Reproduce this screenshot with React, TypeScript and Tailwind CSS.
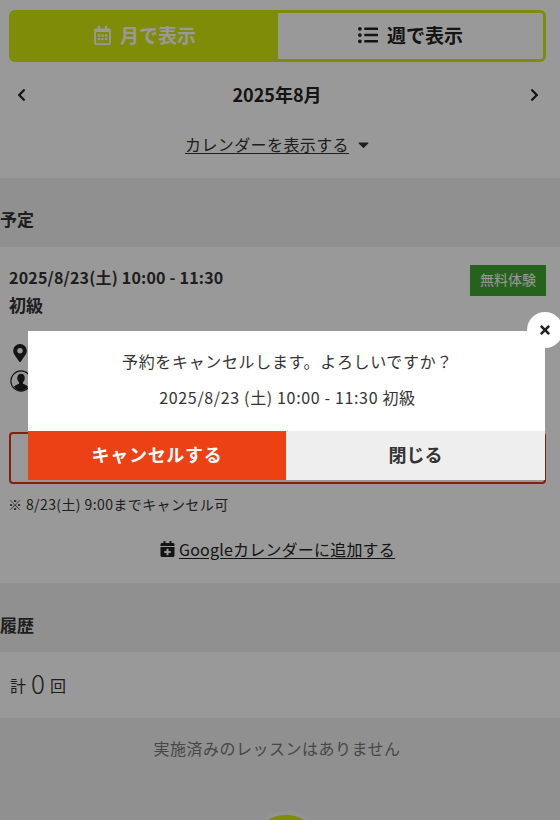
import React from "react";
import {
  FaCalendarPlus,
  FaCaretDown,
  FaChevronLeft,
  FaChevronRight,
  FaListUl,
  FaMapMarkerAlt,
  FaRegCalendarAlt,
  FaTimes,
} from "react-icons/fa";

const FONT = "font-['Noto_Sans_CJK_JP',sans-serif]";

const PersonIcon = () => (
  <svg viewBox="0 0 20 20" className="w-[22px] h-[22px] text-[#222]">
    <circle cx="10" cy="10" r="9.2" fill="none" stroke="currentColor" strokeWidth="1" />
    <path
      fill="currentColor"
      d="M10 3.4c-2.2 0-3.4 1.7-3.4 3.8 0 1.6.7 3 1.6 3.8v1.4c-1.6.8-3.4 1.3-4.6 2.8A9 9 0 0 0 10 19a9 9 0 0 0 6.4-3.8c-1.200-1.500-3-2-4.600-2.800V11c.9-.8 1.600-2.200 1.600-3.800 0-2.100-1.200-3.800-3.400-3.800z"
    />
  </svg>
);

const SectionHead = ({ title, className }: { title: string; className: string }) => (
  <div className={`bg-[#f0f0f0] flex items-end ${className}`}>
    <h2 className="text-[17px] leading-6 font-bold text-[#333]">{title}</h2>
  </div>
);

export default function App() {
  return (
    <div className={`relative w-[560px] h-[820px] overflow-hidden bg-white ${FONT}`}>
      {/* Month / week switch */}
      <div className="pl-[9px] pr-[14px] pt-[10px]">
        <div className="flex h-[52px] rounded-md border-[3px] border-[#d4e90c] overflow-hidden">
          <div className="w-[266px] pb-[2px] bg-[#d4e90c] flex items-center justify-center gap-[9px] text-white text-[19px] font-bold">
            <FaRegCalendarAlt className="w-[17px] h-[19px]" />
            <span>月で表示</span>
          </div>
          <div className="flex-1 pb-[2px] bg-white flex items-center justify-center gap-[9px] text-[#222] text-[19px] font-bold">
            <FaListUl className="w-[20px] h-[20px]" />
            <span>週で表示</span>
          </div>
        </div>
      </div>

      {/* Month nav */}
      <div className="flex items-center justify-between pl-[16px] pr-[20px] mt-[20px] h-[26px] text-[#222]">
        <FaChevronLeft className="w-[11px] h-[14px]" />
        <span className="text-[18px] font-bold pb-[2px] pr-[2px]">2025年8月</span>
        <FaChevronRight className="w-[11px] h-[14px]" />
      </div>
      <div className="flex items-center justify-center gap-[6px] mt-[24px] h-[24px] pr-[3px] text-[#333]">
        <span className="text-[16px] underline underline-offset-2 tracking-[0.4px]">カレンダーを表示する</span>
        <FaCaretDown className="w-[17px] h-[17px]" />
      </div>

      <SectionHead title="予定" className="mt-[22px] h-[69px] pb-[16px]" />

      {/* Reservation card */}
      <div className="h-[336px] pl-[9px] pr-[14px] relative">
        <div className="flex justify-between pt-[18px]">
          <div className="text-[#333] font-bold">
            <div className="text-[16px] leading-6 tracking-[0.2px]">2025/8/23(土) 10:00 - 11:30</div>
            <div className="text-[17px] leading-6 mt-1">初級</div>
          </div>
          <span className="w-[76px] h-[31px] pb-[2px] flex items-center justify-center bg-[#3fa52f] text-white text-[14px]">
            無料体験
          </span>
        </div>
        <div className="mt-[27px] flex flex-col gap-[8px] items-start pl-[1px]">
          <FaMapMarkerAlt className="w-[20px] h-[18px] text-[#222]" />
          <PersonIcon />
        </div>
        <div className="mt-[40px] h-[52px] rounded-[4px] border-2 border-[#e0341a]" />
        <p className="-ml-[1px] mt-[10px] text-[14px] leading-5 tracking-[0.4px] text-[#333]">※ 8/23(土) 9:00までキャンセル可</p>
        <div className="mt-[25px] flex items-center justify-center gap-[4px] text-[#222]">
          <FaCalendarPlus className="w-[15px] h-[16px]" />
          <span className="text-[16px] leading-5 underline underline-offset-2 tracking-[0.2px]">Googleカレンダーに追加する</span>
        </div>
      </div>

      <SectionHead title="履歴" className="h-[69px] pb-[15px]" />

      <div className="h-[66px] px-[10px] pb-[4px] flex items-center gap-[5px] text-[#333]">
        <span className="text-[16px] mt-[4px]">計</span>
        <span className="text-[26px] leading-none font-light">0</span>
        <span className="text-[16px] mt-[4px]">回</span>
      </div>

      <div className="h-[102px] bg-[#f0f0f0] pt-[18px] text-center pr-[6px]">
        <span className="text-[16px] leading-5 tracking-[0.5px] text-[#777]">実施済みのレッスンはありません</span>
      </div>

      {/* Floating button peeking from the bottom */}
      <div className="absolute left-[247px] top-[811px] w-[78px] h-[78px] rounded-full bg-[#d4e90c] border-4 border-[#f5f5f5]" />

      {/* Dim layer */}
      <div className="absolute inset-0 bg-black/40" />

      {/* Modal */}
      <div className="absolute left-[28px] top-[331px] w-[517px] h-[149px] bg-white flex flex-col">
        <div className="flex-1 flex flex-col items-center text-[#333] pl-[2px]">
          <p className="mt-[18px] text-[16px] leading-6 tracking-[0.65px]">予約をキャンセルします。よろしいですか？</p>
          <p className="mt-[12px] text-[16px] leading-6 tracking-[0.65px]">2025/8/23 (土) 10:00 - 11:30 初級</p>
        </div>
        <div className="flex h-[49px]">
          <button className="w-[258px] pb-[2px] bg-[#ec4115] text-white text-[18px] font-bold tracking-[0.7px]">キャンセルする</button>
          <button className="flex-1 pb-[2px] bg-[#eeeeee] text-[#333] text-[18px] font-bold">閉じる</button>
        </div>
        <button className="absolute -right-[18px] -top-[19px] w-9 h-9 rounded-full bg-white flex items-center justify-center text-[#222]">
          <FaTimes className="w-[12px] h-[14px]" />
        </button>
      </div>
    </div>
  );
}
